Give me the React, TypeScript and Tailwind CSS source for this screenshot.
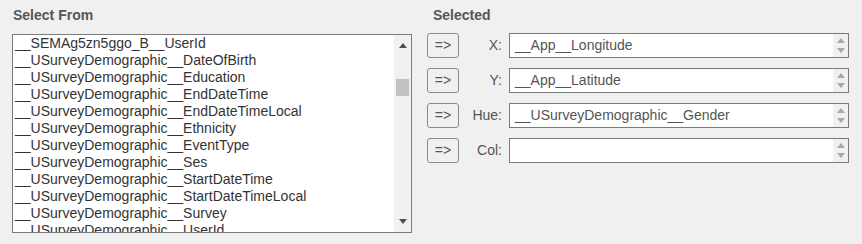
const fields = [
  "__SEMAg5zn5ggo_B__UserId",
  "__USurveyDemographic__DateOfBirth",
  "__USurveyDemographic__Education",
  "__USurveyDemographic__EndDateTime",
  "__USurveyDemographic__EndDateTimeLocal",
  "__USurveyDemographic__Ethnicity",
  "__USurveyDemographic__EventType",
  "__USurveyDemographic__Ses",
  "__USurveyDemographic__StartDateTime",
  "__USurveyDemographic__StartDateTimeLocal",
  "__USurveyDemographic__Survey",
  "__USurveyDemographic__UserId",
];

const slots = [
  { label: "X:", value: "__App__Longitude" },
  { label: "Y:", value: "__App__Latitude" },
  { label: "Hue:", value: "__USurveyDemographic__Gender" },
  { label: "Col:", value: "" },
];

function Tri({ up, color }: { up?: boolean; color: string }) {
  return (
    <svg width="8" height="5" viewBox="0 0 8 5" className="block">
      <path d={up ? "M0 5 L4 0 L8 5 Z" : "M0 0 L8 0 L4 5 Z"} fill={color} />
    </svg>
  );
}

export default function App() {
  return (
    <main
      className="flex h-[244px] w-[862px] bg-[#f0f0f0] pl-3 text-[14px]"
      style={{ fontFamily: '"Liberation Sans", Arial, sans-serif' }}
    >
      <section className="w-[400px]">
        <h2 className="mt-[7px] mb-[11px] pl-px text-[14px] leading-4 font-bold text-[#555]">
          Select From
        </h2>
        <div className="flex h-[199px] border border-[#7a7a7a] bg-white">
          <ul className="flex-1 overflow-hidden pl-[2px] text-[#333]">
            {fields.map((f) => (
              <li key={f} className="h-[17px] leading-[17px] whitespace-nowrap">
                {f}
              </li>
            ))}
          </ul>
          <div className="flex w-[17px] flex-col items-center bg-[#f1f1f1]">
            <div className="mt-[8px]">
              <Tri up color="#505050" />
            </div>
            <div className="mt-[31px] h-[17px] w-[13px] bg-[#c1c1c1]" />
            <div className="mt-auto mb-[8px]">
              <Tri color="#505050" />
            </div>
          </div>
        </div>
      </section>

      <section className="ml-[15px] flex-1 pr-[13px]">
        <h2 className="mt-[7px] mb-[10px] pl-[6px] text-[14px] leading-4 font-bold text-[#555]">
          Selected
        </h2>
        <div className="flex flex-col gap-[10px]">
          {slots.map((s) => (
            <div key={s.label} className="flex items-center">
              <button className="h-[25px] w-[32px] rounded-[3px] border border-[#8a8a8a] bg-[#f0f0f0] text-[14px] text-[#555]">
                =&gt;
              </button>
              <span className="w-[44px] pr-[1px] text-right text-[#555]">{s.label}</span>
              <div className="ml-[6px] flex h-[25px] flex-1 border border-[#7a7a7a] bg-white">
                <span className="flex-1 pl-[5px] leading-[23px] text-[#555]">{s.value}</span>
                <div className="flex w-[15px] flex-col items-center justify-center gap-[5px] bg-[#f0f0f0]">
                  <Tri up color="#a8a8a8" />
                  <Tri color="#a8a8a8" />
                </div>
              </div>
            </div>
          ))}
        </div>
      </section>
    </main>
  );
}
